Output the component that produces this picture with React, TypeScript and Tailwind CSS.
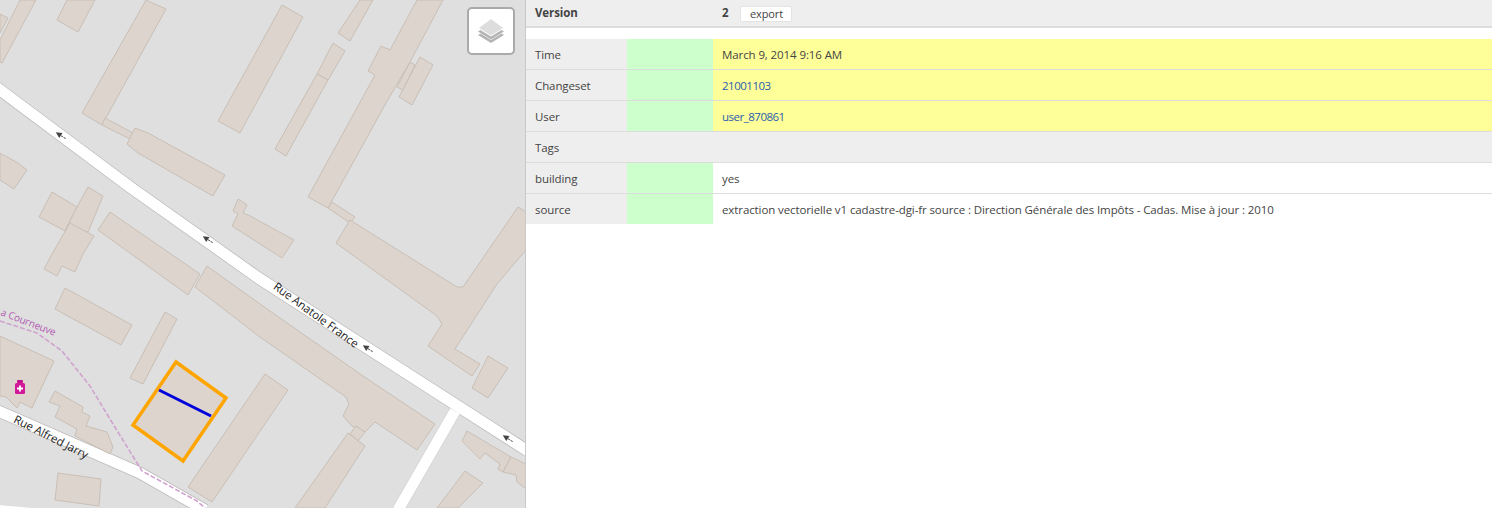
const buildings = [
  '0,14 8,18 0,33',
  '20,0 36,0 2,63 0,62 0,40',
  '67,0 95,0 78,32 57,20',
  '146,0 166,9 102,125 82,113',
  '105,118 133,133 130,139 102,125',
  '135,128 148,133 225,175 213,196 138,153 127,144',
  '282,5 303,17 240,133 218,121',
  '0,153 18,163 27,170 14,189 0,180',
  '52,192 77,207 65,231 39,217',
  '88,187 103,196 88,232 66,229 77,207',
  '70,223 94,236 83,254 75,272 62,266 57,276 44,269 52,254',
  '110,212 200,274 188,295 98,230',
  '207,266 260,304 363,376 435,424 417,450 375,422 365,432 352,426 343,416 349,404 346,397 260,337 195,287',
  '356,426 365,432 358,441 350,434',
  '265,374 288,390 212,502 188,487',
  '348,433 365,446 325,508 295,508',
  '165,312 177,319 143,384 130,378',
  '65,288 132,325 121,345 55,309',
  '0,336 54,361 32,408 20,402 17,408 6,397 0,396',
  '55,391 83,407 82,412 90,416 86,426 107,432 113,447 110,454 75,436 77,429 55,417 60,406 49,402',
  '58,473 101,479 99,506 55,500',
  '176,362 226,398 183,461 133,425',
  '360,0 373,0 350,41 338,33',
  '333,43 345,51 328,80 317,74',
  '317,74 328,80 286,156 275,149',
  '417,0 443,0 410,62 386,103 328,208 308,197 375,75 368,71 381,46 390,50',
  '410,62 415,65 403,90 397,87',
  '420,57 433,65 412,105 399,97',
  '332,202 355,217 350,223 328,208',
  '350,220 457,287 463,287 518,207 526,212 526,250 497,284 455,349 480,364 472,376 447,359 428,346 442,324 437,316 336,243',
  '488,356 508,368 488,398 472,388',
  '238,199 247,205 243,213 250,216 294,240 282,258 232,226 238,214 233,211',
  '467,431 511,457 503,472 498,469 500,464 485,453 480,459 462,441',
  '511,457 526,464 526,489 517,482 516,475 503,472',
  '465,471 483,483 458,508 437,508',
]

const arrows = [
  [60, 135],
  [207, 239],
  [367, 348],
  [507, 438],
]

function StreetMap() {
  return (
    <svg viewBox="0 0 525 508" className="block w-[525px] h-[508px]">
      <rect width="525" height="508" fill="#dfdfdf" />

      {/* roads */}
      <g fill="none" strokeLinejoin="round">
        <polyline points="-20,75 130,187 260,279 453,403 545,462" stroke="#bdb8b8" strokeWidth="12.5" />
        <polyline points="455,411 398,510" stroke="#cfcaca" strokeWidth="12" />
        <polyline points="-20,403 140,473 205,510" stroke="#bdb8b8" strokeWidth="12.5" />
        <polyline points="-10,506 50,511" stroke="#ffffff" strokeWidth="3" />
        <polyline points="-20,75 130,187 260,279 453,403 545,462" stroke="#ffffff" strokeWidth="11" />
        <polyline points="455,411 398,510" stroke="#ffffff" strokeWidth="11" />
        <polyline points="-20,403 140,473 205,510" stroke="#ffffff" strokeWidth="11" />
      </g>

      {/* buildings */}
      <g fill="#dcd4cd" stroke="#c9bfb6" strokeWidth="1" strokeLinejoin="round">
        {buildings.map((points) => (
          <polygon key={points} points={points} />
        ))}
      </g>

      {/* footpath */}
      <polyline
        points="0,321 37,333 62,351 90,386 113,424 142,471 197,501 205,508"
        fill="none"
        stroke="#d0a2cf"
        strokeWidth="1.6"
        strokeDasharray="5 2"
      />

      {/* one way arrows */}
      {arrows.map(([x, y]) => (
        <g key={x} transform={`translate(${x} ${y}) rotate(33)`}>
          <path d="M-5 0 L1 -3 L1 3 Z" fill="#444444" />
          <path d="M1 0 H7" stroke="#555555" strokeWidth="1" strokeDasharray="2.5 0.8" />
        </g>
      ))}

      {/* labels */}
      <g fontFamily="'Open Sans', sans-serif" fontSize="11.5">
        <text x="316" y="319" textAnchor="middle" transform="rotate(36 316 315)" fill="#222222">
          Rue Anatole France
        </text>
        <text x="51" y="441" textAnchor="middle" transform="rotate(27 51 437)" fill="#222222">
          Rue Alfred Jarry
        </text>
        <text x="0" y="315" fontSize="10" transform="rotate(21 0 315)" fill="#b35ab3">
          a Courneuve
        </text>
      </g>

      {/* pharmacy */}
      <g>
        <rect x="17" y="380" width="6" height="3" rx="1" fill="#c4108c" />
        <rect x="15" y="383" width="10" height="11" rx="1.5" fill="#d4189a" />
        <path d="M20 385.500 V391.500 M17 388.500 H23" stroke="#ffffff" strokeWidth="1.8" />
      </g>

      {/* selected way */}
      <polygon points="176,362 226,398 183,461 133,425" fill="none" stroke="#ffa500" strokeWidth="3.5" strokeLinejoin="miter" />
      <line x1="159" y1="390" x2="211" y2="416" stroke="#0000dd" strokeWidth="3" />
    </svg>
  )
}

function LayersButton() {
  return (
    <div className="absolute left-[467px] top-[7px] w-[48px] h-[48px] bg-white border-2 border-[#aaaaaa] rounded-[5px] flex items-center justify-center">
      <svg viewBox="0 0 26 26" className="w-[26px] h-[26px]">
        <path d="M0 17 L13 25 L26 17 L13 9 Z" fill="#b4b4b4" />
        <path d="M0 14 L13 22 L26 14 L13 6 Z" fill="#ffffff" />
        <path d="M0 13.5 L13 21.5 L26 13.5 L13 5.5 Z" fill="#b4b4b4" />
        <path d="M0 10.5 L13 18.5 L26 10.5 L13 2.5 Z" fill="#ffffff" />
        <path d="M1 10 L13 17.5 L25 10 L13 1 Z" fill="#dddddd" />
      </svg>
    </div>
  )
}

interface RowProps {
  label: string
  value: string
  link?: boolean
  changed?: boolean
  last?: boolean
}

function Row({ label, value, link, changed, last }: RowProps) {
  return (
    <div className={`flex ${last ? 'h-[30px]' : 'h-[31px] border-b border-[#dddddd]'}`}>
      <div className="w-[101px] bg-[#eeeeee] pl-[9px] pt-px flex items-center">{label}</div>
      <div className="w-[86px] bg-[#ccffcc]" />
      <div className={`flex-1 pl-[9px] pt-px flex items-center ${changed ? 'bg-[#ffff99]' : 'bg-white'} ${link ? 'text-[#2a5db0] tracking-[-0.5px]' : ''}`}>
        {value}
      </div>
    </div>
  )
}

export default function App() {
  return (
    <div className="flex h-[508px] w-[1492px] overflow-hidden bg-white font-['Open_Sans',sans-serif] text-[11.5px] tracking-[-0.1px] text-[#444444]">
      <div className="relative w-[526px] shrink-0 border-r border-[#c8c8c8]">
        <StreetMap />
        <LayersButton />
      </div>

      <div className="flex-1 flex flex-col">
        <div className="flex items-center h-[28px] bg-[#eeeeee] border-b-2 border-[#dddddd] font-bold">
          <div className="w-[187px] pl-[9px]">Version</div>
          <div className="pl-[9px] flex items-center">
            <span>2</span>
            <button className="ml-[12px] mt-px w-[52px] h-[16px] bg-white rounded-[2px] border border-[#e4e4e4] text-[11px] font-normal leading-none">
              export
            </button>
          </div>
        </div>

        <div className="mt-[11px]">
          <Row label="Time" value="March 9, 2014 9:16 AM" changed />
          <Row label="Changeset" value="21001103" link changed />
          <Row label="User" value="user_870861" link changed />
          <div className="flex items-center h-[31px] bg-[#eeeeee] pl-[9px] pt-px border-b border-[#dddddd]">Tags</div>
          <Row label="building" value="yes" />
          <Row
            label="source"
            value="extraction vectorielle v1 cadastre-dgi-fr source : Direction Générale des Impôts - Cadas. Mise à jour : 2010"
            last
          />
        </div>
      </div>
    </div>
  )
}
